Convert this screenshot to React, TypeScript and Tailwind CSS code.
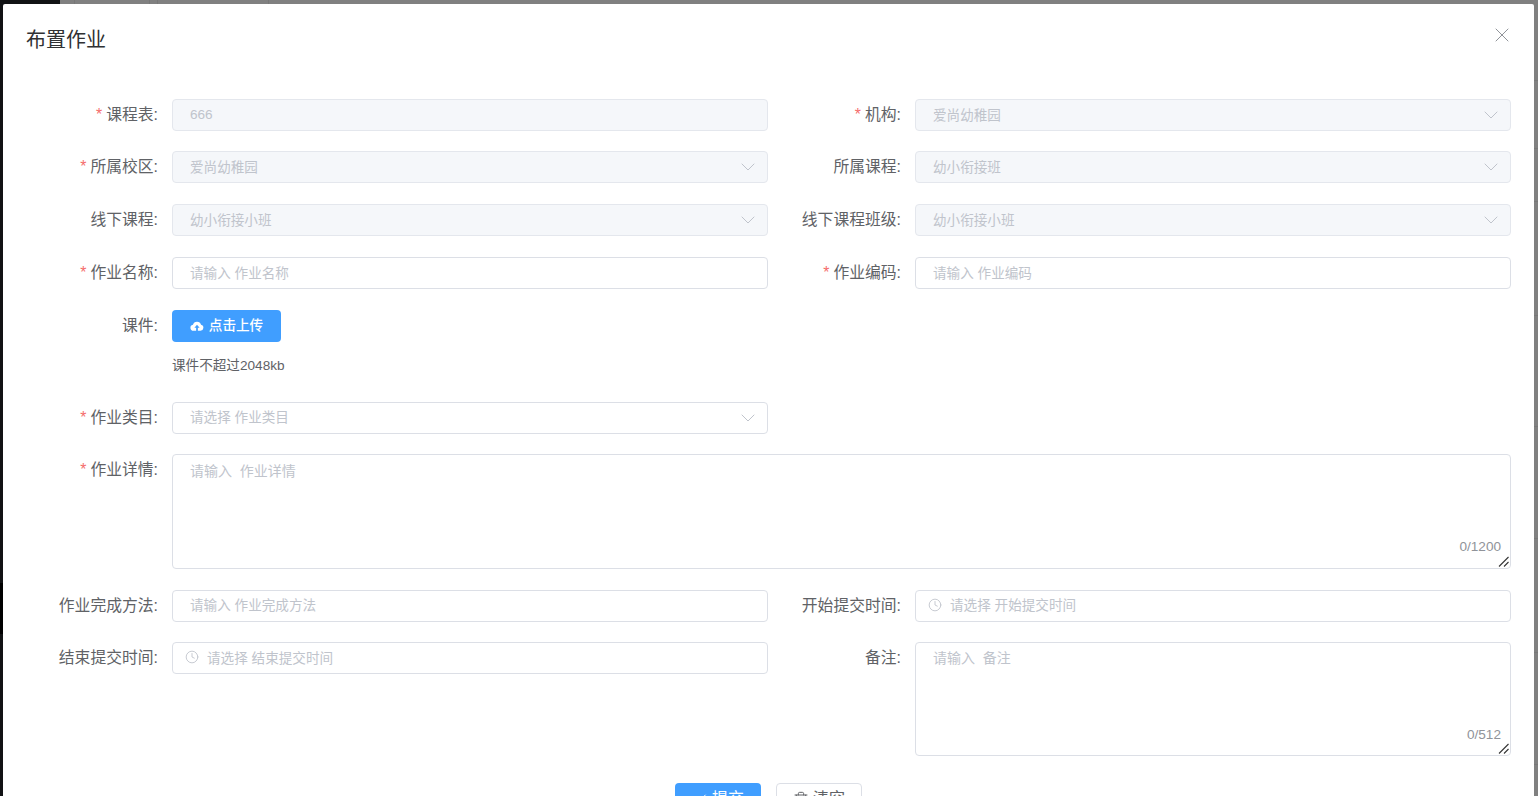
import React from 'react';
import { Check, ChevronDown, Clock, Trash2, X } from 'lucide-react';

const boxBase = 'h-8 w-[596px] rounded border border-[#dcdfe6] px-[17px] text-[13.6px] outline-none';
const disabledBox = 'bg-[#f5f7fa] border-[#e4e7ed] text-[#c0c4cc] pb-[2px]';

const tableLines = [80, 148, 201, 315, 426, 538, 652, 764];
const headerLines = [74, 149, 157, 268];

const Label: React.FC<{ text: string; required?: boolean; width: string }> = ({ text, required, width }) => (
  <label className={`${width} mr-[14px] flex h-8 shrink-0 items-center justify-end pb-px text-[15.8px] text-[#606266]`}>
    {required && <span className="mr-1 text-[#f56c6c]">*</span>}
    {text}:
  </label>
);

const TextBox: React.FC<{ placeholder?: string; value?: string; disabled?: boolean; lifted?: boolean }> = ({ placeholder, value, disabled, lifted }) => (
  <input
    readOnly
    disabled={disabled}
    value={value}
    placeholder={placeholder}
    className={`${boxBase} placeholder:text-[#c0c4cc] ${disabled ? disabledBox : 'bg-white'} ${lifted ? 'pb-[2px]' : ''}`}
  />
);

const SelectBox: React.FC<{ placeholder?: string; value?: string; disabled?: boolean }> = ({ placeholder, value, disabled }) => (
  <div className="relative h-8 w-[596px]">
    <input
      readOnly
      disabled={disabled}
      value={value}
      placeholder={placeholder}
      className={`${boxBase} pb-[2px] placeholder:text-[#c0c4cc] ${disabled ? disabledBox : 'bg-white'}`}
    />
    <ChevronDown className="absolute right-[8px] top-[4px] h-6 w-6 text-[#c0c4cc]" strokeWidth={1} />
  </div>
);

const TimeBox: React.FC<{ placeholder: string; lifted?: boolean }> = ({ placeholder, lifted }) => (
  <div className="relative h-8 w-[596px]">
    <input
      readOnly
      placeholder={placeholder}
      className={`${boxBase} bg-white pl-[34px] placeholder:text-[#c0c4cc] ${lifted ? 'pb-[2px]' : ''}`}
    />
    <Clock className="absolute left-[13px] top-[8px] h-[14px] w-[14px] text-[#c0c4cc]" strokeWidth={1.5} />
  </div>
);

const AreaBox: React.FC<{ placeholder: string; count: string; width: string; height: string; countPos: string; padTop: string }> = ({ placeholder, count, width, height, countPos, padTop }) => (
  <div className={`relative ${width} ${height}`}>
    <textarea
      readOnly
      placeholder={placeholder}
      className={`block h-full w-full resize-none rounded border border-[#dcdfe6] bg-white px-[17px] ${padTop} text-[14px] leading-[21px] outline-none placeholder:text-[#c0c4cc]`}
    />
    <span className={`absolute ${countPos} right-[10px] text-[13.6px] leading-4 text-[#909399]`}>{count}</span>
    {/* the browser's resize grip */}
    <svg viewBox="0 0 12 12" className="pointer-events-none absolute bottom-[1px] right-[1px] h-3 w-3 stroke-[#333]" strokeWidth={1.1}>
      <path d="M1 10.5 10.5 1" />
      <path d="M6 10.5 10.5 6" />
    </svg>
  </div>
);

const Backdrop = () => (
  <div className="absolute inset-0 bg-[#808080]">
    <div className="absolute left-0 top-0 h-full w-[60px] bg-[#111214]" />
    <div className="absolute left-0 top-[583px] h-[51px] w-[60px] bg-black" />
    {headerLines.map((x) => (
      <div key={x} className="absolute top-0 h-1 w-px bg-[#777]" style={{ left: x }} />
    ))}
    {tableLines.map((y) => (
      <div key={y} className="absolute right-0 h-px w-1 bg-[#777]" style={{ top: y }} />
    ))}
  </div>
);

export default function App() {
  return (
    <div className="relative h-[796px] w-[1538px] overflow-hidden pl-[3px] pt-[4px] font-['Liberation_Sans','Noto_Sans_CJK_SC',sans-serif]">
      <Backdrop />
      <div className="relative w-[1531px] rounded-[2px] bg-white pb-10">
        <div className="flex h-[95px] items-start px-[23px] pt-[21px]">
          <h2 className="pt-px text-[20px] leading-7 text-[#303133]">布置作业</h2>
          <X className="absolute right-[20px] top-[19px] h-6 w-6 text-[#909399]" strokeWidth={1} />
        </div>

        <div className="flex">
          <Label width="w-[155px]" text="课程表" required />
          <TextBox value="666" disabled />
          <Label width="w-[133px]" text="机构" required />
          <SelectBox value="爱尚幼稚园" disabled />
        </div>
        <div className="mt-5 flex">
          <Label width="w-[155px]" text="所属校区" required />
          <SelectBox value="爱尚幼稚园" disabled />
          <Label width="w-[133px]" text="所属课程" />
          <SelectBox value="幼小衔接班" disabled />
        </div>
        <div className="mt-[21px] flex">
          <Label width="w-[155px]" text="线下课程" />
          <SelectBox value="幼小衔接小班" disabled />
          <Label width="w-[133px]" text="线下课程班级" />
          <SelectBox value="幼小衔接小班" disabled />
        </div>
        <div className="mt-[21px] flex">
          <Label width="w-[155px]" text="作业名称" required />
          <TextBox placeholder="请输入 作业名称" />
          <Label width="w-[133px]" text="作业编码" required />
          <TextBox placeholder="请输入 作业编码" />
        </div>

        <div className="mt-[21px] flex">
          <Label width="w-[155px]" text="课件" />
          <div>
            <button className="flex h-8 w-[109px] items-center justify-center gap-[5px] rounded bg-[#409eff] text-[13.6px] font-medium text-white">
              <svg viewBox="0 0 16 16" className="h-[14px] w-[14px] fill-white">
                <path d="M4 13.5a3.5 3.5 0 0 1-.6-6.95A4.75 4.75 0 0 1 12.6 6.6 3.5 3.5 0 0 1 12 13.5H9V10h2L8 6.5 5 10h2v3.5H4z" />
              </svg>
              点击上传
            </button>
            <p className="mt-[14px] text-[13.6px] leading-5 text-[#606266]">课件不超过2048kb</p>
          </div>
        </div>

        <div className="mt-[26px] flex">
          <Label width="w-[155px]" text="作业类目" required />
          <SelectBox placeholder="请选择 作业类目" />
        </div>
        <div className="mt-5 flex">
          <Label width="w-[155px]" text="作业详情" required />
          <AreaBox width="w-[1339px]" height="h-[115px]" countPos="bottom-[14px]" padTop="pt-[6px]" placeholder="请输入  作业详情" count="0/1200" />
        </div>
        <div className="mt-[21px] flex">
          <Label width="w-[155px]" text="作业完成方法" />
          <TextBox placeholder="请输入 作业完成方法" lifted />
          <Label width="w-[133px]" text="开始提交时间" />
          <TimeBox placeholder="请选择 开始提交时间" lifted />
        </div>
        <div className="mt-5 flex items-start">
          <Label width="w-[155px]" text="结束提交时间" />
          <TimeBox placeholder="请选择 结束提交时间" />
          <Label width="w-[133px]" text="备注" />
          <AreaBox width="w-[596px]" height="h-[114px]" countPos="bottom-[13px]" padTop="pt-[5px]" placeholder="请输入  备注" count="0/512" />
        </div>

        <div className="ml-[672px] mt-[27px] flex gap-[15px]">
          <button className="flex h-8 w-[86px] items-center justify-center gap-1 rounded bg-[#409eff] text-[16px] text-white">
            <Check className="h-4 w-4" strokeWidth={1.5} />
            提交
          </button>
          <button className="flex h-8 w-[86px] items-center justify-center gap-1 rounded border border-[#dcdfe6] bg-white text-[16px] text-[#606266]">
            <Trash2 className="h-4 w-4" strokeWidth={1.5} />
            清空
          </button>
        </div>
      </div>
    </div>
  );
}
